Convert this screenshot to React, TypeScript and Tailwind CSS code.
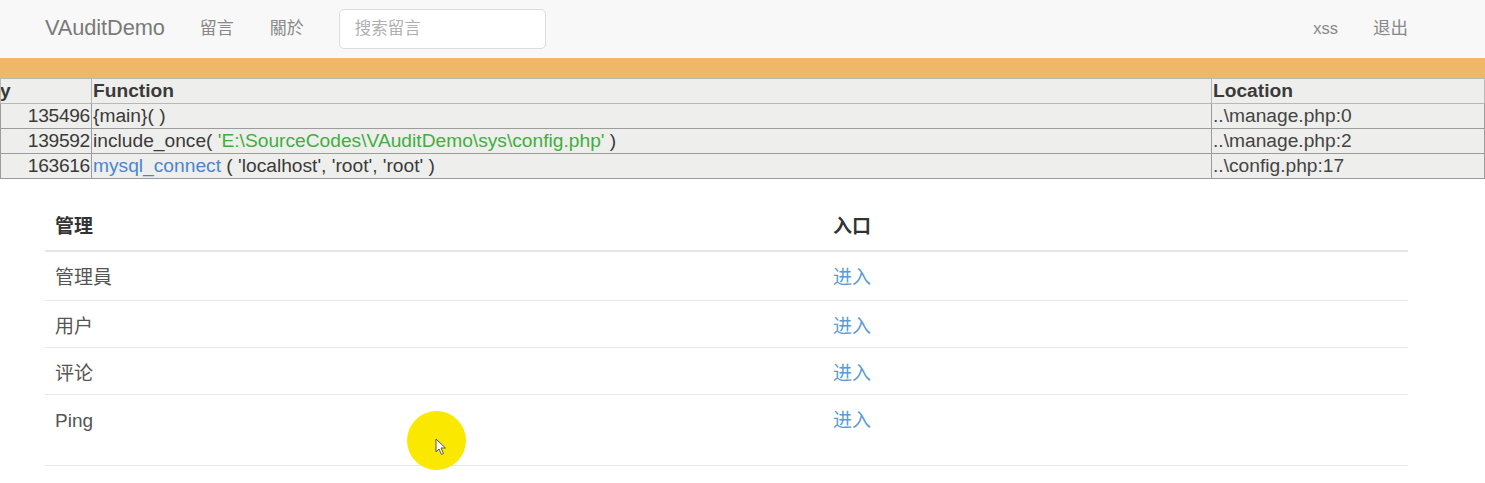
import React from 'react';

const font = "font-['Liberation_Sans','Noto_Sans_CJK_SC',sans-serif]";

interface Frame {
    memory: string;
    fn: React.ReactNode;
    location: string;
}

const frames: Frame[] = [
    { memory: '135496', fn: <>{'{main}( )'}</>, location: '..\\manage.php:0' },
    {
        memory: '139592',
        fn: (
            <>
                include_once( <span className="text-[#3fae3f]">'E:\SourceCodes\VAuditDemo\sys\config.php'</span> )
            </>
        ),
        location: '..\\manage.php:2',
    },
    {
        memory: '163616',
        fn: (
            <>
                <span className="text-[#4a86d0]">mysql_connect</span> ( 'localhost', 'root', 'root' )
            </>
        ),
        location: '..\\config.php:17',
    },
];

const entries = ['管理員', '用户', '评论', 'Ping'];

const Navbar: React.FC = () => (
    <nav className="h-[58px] bg-[#f8f8f8] border-b border-[#fbfbfb] flex items-center pl-[45px] pr-[77px]">
        <a className="text-[21.8px] text-[#7a7a7a] tracking-[-0.1px]">VAuditDemo</a>
        <a className="ml-[35px] text-[17px] text-[#888]">留言</a>
        <a className="ml-[36px] text-[17px] text-[#888]">關於</a>
        <div className="ml-[35px] w-[207px] h-[40px] bg-white border border-[#dcdcdc] rounded-[5px] flex items-center pl-[15px] text-[16.5px] text-[#b0b0b0]">
            搜索留言
        </div>
        <div className="ml-auto flex items-center">
            <a className="text-[16.5px] text-[#888]">xss</a>
            <a className="ml-[35px] text-[17.5px] text-[#888]">退出</a>
        </div>
    </nav>
);

const XdebugTable: React.FC = () => (
    <div className="overflow-hidden">
        <div className="h-[20px] bg-[#efb768]" />
        <table className="w-full border-collapse bg-[#eeeeec] text-[19.2px] leading-[22px] text-[#3a3a3a]">
            <colgroup>
                <col className="w-[91px]" />
                <col className="w-[1120px]" />
                <col />
            </colgroup>
            <thead>
                <tr>
                    <th className="border border-[#b8b8b8] p-[1px] text-left font-bold overflow-hidden whitespace-nowrap">
                        <span className="inline-block -ml-[65px]">Memory</span>
                    </th>
                    <th className="border border-[#b8b8b8] p-[1px] text-left font-bold">Function</th>
                    <th className="border border-[#b8b8b8] p-[1px] text-left font-bold">Location</th>
                </tr>
            </thead>
            <tbody>
                {frames.map((f) => (
                    <tr key={f.memory}>
                        <td className="border border-[#9c9c9c] p-[1px] text-right tracking-[-0.3px]">{f.memory}</td>
                        <td className="border border-[#9c9c9c] p-[1px] whitespace-nowrap">{f.fn}</td>
                        <td className="border border-[#9c9c9c] p-[1px] text-[#444]">{f.location}</td>
                    </tr>
                ))}
            </tbody>
        </table>
    </div>
);

const AdminTable: React.FC = () => (
    <div className="pl-[45px] pr-[77px] pt-[26px]">
        <table className="w-full border-collapse text-[19px]">
            <colgroup>
                <col className="w-[778px]" />
                <col />
            </colgroup>
            <thead>
                <tr className="border-b-2 border-[#e5e5e5]">
                    <th className="h-[46px] px-[10px] text-left font-bold text-[#333]">管理</th>
                    <th className="h-[46px] px-[10px] text-left font-bold text-[#333]">入口</th>
                </tr>
            </thead>
            <tbody>
                {entries.map((name, i) => {
                    const h = i === 0 ? 'h-[49px]' : i === entries.length - 1 ? 'h-[71px]' : 'h-[47px]';
                    return (
                        <tr key={name} className="border-b border-[#e8e8e8]">
                            <td className={`${h} px-[10px] align-top pt-[12px] text-[#555]`}>{name}</td>
                            <td className={`${h} px-[10px] align-top pt-[12px] text-[#5b9bd5]`}>进入</td>
                        </tr>
                    );
                })}
            </tbody>
        </table>
    </div>
);

export default function App() {
    return (
        <div className={`relative w-[1485px] h-[483px] bg-white overflow-hidden ${font}`}>
            <Navbar />
            <XdebugTable />
            <AdminTable />

            {/* click highlight from the screen recording */}
            <div className="absolute left-[407px] top-[411px] w-[59px] h-[59px] rounded-full bg-[#fbe800]">
                <svg className="absolute left-[28px] top-[27px]" width="12" height="18" viewBox="0 0 12 18">
                    <path d="M1 1 L1 14 L4 11 L6.5 16.5 L8.5 15.5 L6 10 L10.5 10 Z" fill="#fff" stroke="#555" strokeWidth="1" strokeLinejoin="round" />
                </svg>
            </div>
        </div>
    );
}
